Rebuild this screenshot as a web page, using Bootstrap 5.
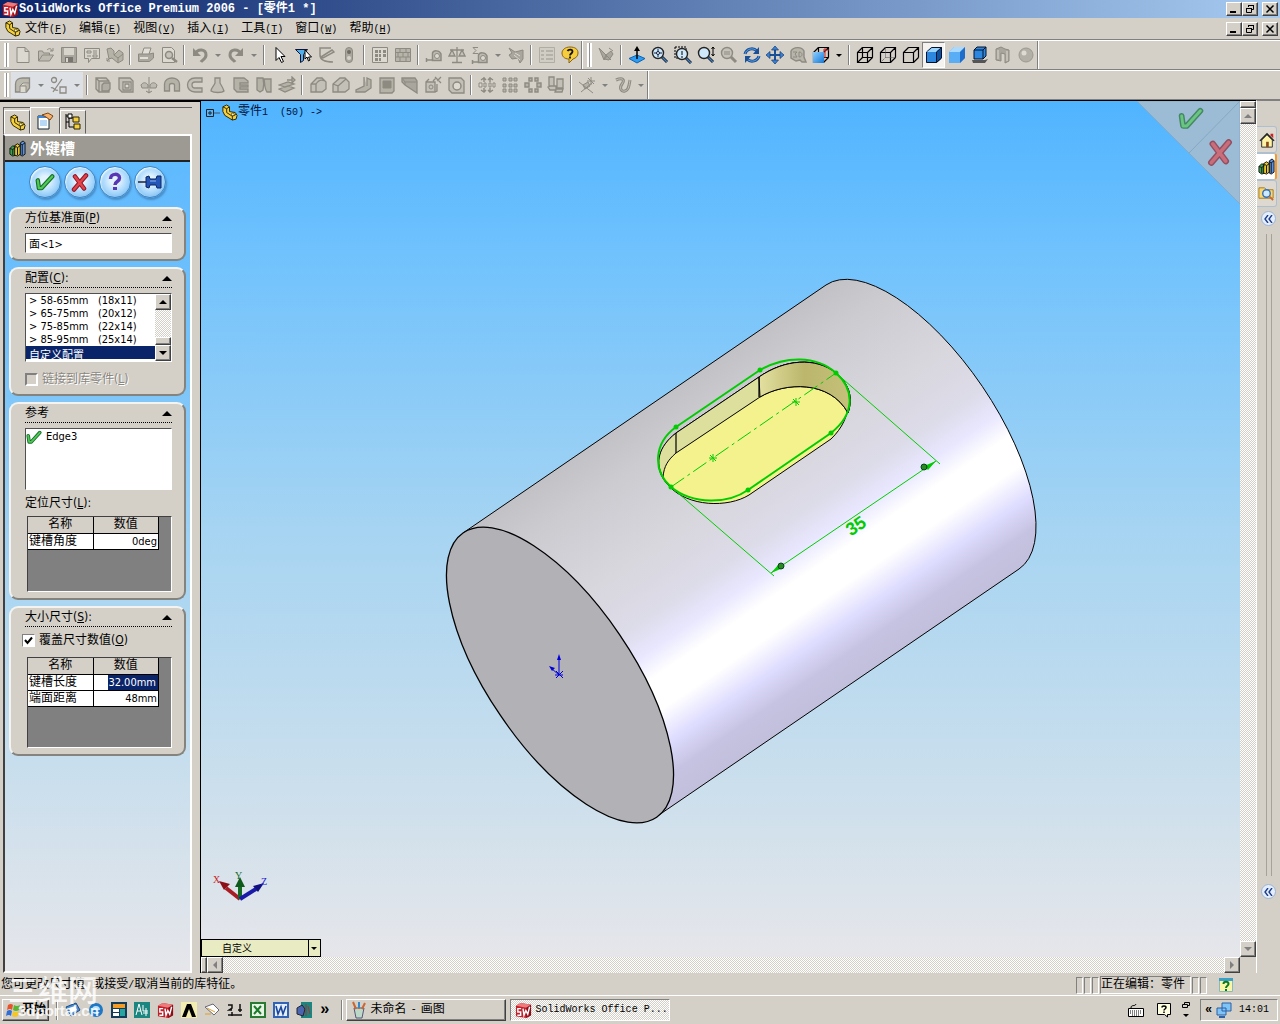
<!DOCTYPE html>
<html lang="zh-CN">
<head>
<meta charset="utf-8">
<meta name="viewport" content="width=device-width, initial-scale=1">
<title>SolidWorks Office Premium 2006 - [零件1 *]</title>
<link href="https://cdn.jsdelivr.net/npm/bootstrap@5.3.0/dist/css/bootstrap.min.css" rel="stylesheet">
<script src="https://cdn.jsdelivr.net/npm/bootstrap@5.3.0/dist/js/bootstrap.bundle.min.js" defer></script>
<style>
:root{--face:#d4d0c8;--dark:#808080;--navy:#0a246a}
body{font:12px/16px "Liberation Mono","Noto Sans CJK SC",monospace;color:#000;background:var(--face);overflow:hidden}
button,select,input{font:inherit;color:inherit;border-radius:0}
button{background:none;border:0;padding:0}
svg{display:block;flex:none}
.half{font-size:10px}
.raised{background:var(--face);border:1px solid;border-color:#fff #404040 #404040 #fff;box-shadow:inset -1px -1px 0 #808080}
.sunken{border:1px solid;border-color:#808080 #fff #fff #808080}
.dither{background:repeating-conic-gradient(#fff 0 25%,#d4d0c8 0 50%) 0 0/2px 2px}
.titlebar{height:18px;background:linear-gradient(90deg,#0a246a,#a6caf0);color:#fff;font-weight:700;padding:0 2px}
.winbtn{width:16px;height:14px;display:flex;align-items:center;justify-content:center}
.menubar{height:22px;border-bottom:1px solid #808080;padding:0 2px 0 4px}
.menubar a{color:#000;text-decoration:none}
.menus{gap:12px;padding-top:2px}
.bar{height:30px;border-top:1px solid #fff;border-bottom:1px solid #808080;padding-left:4px}
.grip{width:5px;height:24px;border:solid #fff;border-width:0 2px;background:#909090;margin-right:2px}
.tb{width:23px;height:26px;display:flex;align-items:center;justify-content:center}
.tb:disabled{color:#8d8a82}
.tb svg{width:18px;height:18px}
.tb.on{background:#f4f3f0;border:1px solid;border-color:#808080 #fff #fff #808080}
.dd{width:13px;height:26px;display:flex;align-items:center;justify-content:center}
.dd::after{content:"";border:solid transparent;border-width:3px 3px 0;border-top-color:currentColor}
.dd:disabled{color:#808080}
.sepv{width:8px;height:20px;padding-left:3px}
.sepv::after{content:"";display:block;width:2px;height:20px;border-left:1px solid #808080;background:#fff}
.endline{width:2px;height:28px;border-left:1px solid #808080;background:#fff}
.side{width:201px;border-top:2px solid #000;padding:5px 8px 0 3px;flex:none;border-right:1px solid #000}
.sideborder{height:27px;border:solid;border-width:1px 0 0 1px;border-color:#606060}
.tabb{width:26px;height:24px;display:flex;align-items:center;justify-content:center;border:1px solid;border-color:#fff #606060 transparent #fff}
.tabb.cur{height:27px;width:30px}
.pane{border:2px solid #fff;border-left-color:#404040;background:linear-gradient(#5cb9ff,#74c2fa 25%,#b4d9f0 60%,#d3e1ec 84%,#e6e6ea)}
.pmhead{height:26px;background:#9c9a92;border-bottom:2px solid #222;color:#fff;font:700 15px/24px "Noto Sans CJK SC",sans-serif}
.orbs{gap:3px;padding:0 0 5px}
.orb{width:32px;height:32px;border-radius:50%;display:flex;align-items:center;justify-content:center;border:1px solid #3d86c4;background:radial-gradient(circle at 50% 45%,#e2f3ff 20%,#9fd3fb 60%,#5ba2dc);box-shadow:1px 2px 2px #33669988,inset 1px 1px 2px #fff}
.grp{background:var(--face);border:2px solid;border-color:#f4f3ef #85837d #85837d #f4f3ef;border-radius:9px;padding:1px 12px 6px 14px;font-family:"DejaVu Sans Condensed","Noto Sans CJK SC",sans-serif;font-size:11px}
.grp h2{font-size:12px;line-height:17px;font-weight:400;margin:0 0 5px;border-bottom:1px dotted #000}
.grp h2 i{border:solid transparent;border-width:0 5px 5px;border-bottom-color:#000}
.field{display:block;width:100%;background:#fff;border:1px solid;border-color:#505050 #fff #fff #505050;padding:0 3px}
.tick{appearance:none;width:13px;height:13px;margin:0;background:var(--face);border:2px solid;border-color:#808080 #fff #fff #808080;flex:none}
.tick:checked{border-width:1px;background:#fff url("data:image/svg+xml,%3Csvg xmlns='http://www.w3.org/2000/svg' viewBox='0 0 11 11'%3E%3Cpath d='M2 5l2.500 3L9 2.500' fill='none' stroke='%23000' stroke-width='2'/%3E%3C/svg%3E") center/11px}
.lbl{font-size:12px;line-height:18px}
.lbl.off{color:#8a8780;text-shadow:1px 1px #fff}
.lbox{border:1px solid;border-color:#505050 #fff #fff #505050;height:69px}
.lbox select{appearance:none;border:0;padding:0;outline:0;background:#fff;overflow:hidden;height:67px}
.lbox option{padding:0 3px;font-size:11px;line-height:13px;min-height:13px;height:13px;white-space:pre}
.lbox option:checked{background:linear-gradient(#0a246a,#0a246a);-webkit-text-fill-color:#fff}
.sbtn{width:16px;height:16px;flex:none;display:flex;align-items:center;justify-content:center}
.arr{border:4px solid transparent}
.arr.up{border-top:0;border-bottom-color:currentColor}
.arr.dn{border-bottom:0;border-top-color:currentColor}
.arr.lt{border-left:0;border-right-color:currentColor}
.arr.rt{border-right:0;border-left-color:currentColor}
.gridbox{background:#808080;border:1px solid;border-color:#404040 #fff #fff #404040;margin:0 0 0 2px}
.gridbox table{width:131px;border-collapse:collapse;font-size:12px;line-height:15px;table-layout:fixed}
.gridbox td,.gridbox th{border:1px solid #000;border-top:0;border-left:0;padding:0 1px;height:16px;white-space:nowrap;overflow:hidden;font-weight:400}
.gridbox th{background:var(--face);text-align:center}
.gridbox td{background:#fff}
.gridbox td+td{text-align:right;font-size:11px}
.gridbox input{display:block;width:100%;height:15px;border:0;padding:0 2px;text-align:right;color:#fff;background:linear-gradient(90deg,#fff 14px,#0a246a 14px)}
.view{background:linear-gradient(#50b4ff,#70c2fd 18%,#a6d4f2 50%,#cfe0ec 83%,#e6e6ea);min-height:0}
.view>.scene{position:absolute;width:100%;height:100%;left:0;top:0}
.tree{left:4px;top:3px;color:#00123a}
.corner{right:0;top:0}
.triad{left:6px;bottom:50px}
.cfg{left:0;bottom:0;width:120px;height:18px}
.cfg select{appearance:none;background:#e9ebc2;border:1px solid #000;width:100%;height:18px;padding:2px 20px 0;font-size:10px}
.cfg::after{content:"";position:absolute;right:0;top:0;width:13px;height:18px;border:1px solid #000;pointer-events:none}
.cfg i{position:absolute;right:4px;top:8px;border:solid transparent;border-width:3px 3px 0;border-top-color:#000;pointer-events:none}
.rail{width:24px;flex:none;border-top:1px solid #808080;border-left:1px solid #fff;padding-top:25px}
.railtab{width:20px;height:27px;display:flex;align-items:center;justify-content:center;border:1px solid #aebfd0;border-left:0;border-radius:0 3px 3px 0;background:#ddd9d1}
.railtab.cur{background:#fff;border-right:2px solid #f39a2e}
.chev{width:15px;height:15px;border-radius:50%;background:#e4eefb;border:1px solid #9db4d4;color:#1c3c8c;display:flex;align-items:center;justify-content:center}
.status{height:22px;padding:2px 47px 0 1px;gap:1px}
.cellp{width:7px;height:17px}
.taskbar{height:29px;border-top:1px solid #fff;padding:0 2px}
.task{width:160px;height:22px;padding:0 4px}
.wm{left:8px;bottom:4px;color:#ffffffd9;pointer-events:none;font-family:"Noto Sans CJK SC",sans-serif}
.wm b{display:block;font-size:30px;line-height:28px;font-weight:500}
.wm small{display:block;font:700 15px/18px "Liberation Sans",sans-serif;padding-left:10px}
</style>
</head>
<body class="vh-100 d-flex flex-column position-relative">

<svg width="0" height="0" class="position-absolute" aria-hidden="true">
<defs>
<linearGradient id="blue" x1="0" y1="0" x2="1" y2="1"><stop offset="0" stop-color="#8fd0ff"/><stop offset="1" stop-color="#1478d8"/></linearGradient>
<symbol id="part" viewBox="0 0 18 18"><path d="M2 3l4-2 3 2v5l6 1 2 3-1 4-4 1-8-5-2-4z" fill="#f4d13c" stroke="#2b2200"/><path d="M2 3l4 2 3-2M6 5v4l6 4 4-2M12 13v4" fill="none" stroke="#2b2200"/><circle cx="12.500" cy="11" r="1.500" fill="#fff6b0" stroke="#2b2200" stroke-width=".7"/></symbol>
<symbol id="books" viewBox="0 0 18 18"><path d="M1 9l3-3 3 2v8l-3 1-3-2z" fill="#3fa34d" stroke="#111"/><path d="M6 6l3-2 3 2v9l-3 2-3-1z" fill="#e6c72d" stroke="#111"/><path d="M12 3l3-2 2 2v12l-3 2-2-1z" fill="#5c93e0" stroke="#111"/><path d="M1 9l3 1 3-2M4 10v6M6 6l3 2 3-2M9 8v8M12 4l2 1 3-2M14 5v11" stroke="#111" fill="none"/></symbol>
<symbol id="sw" viewBox="0 0 18 18"><path d="M1 4l5-3 11 2v11l-5 3-11-2z" fill="#c11f2a"/><path d="M1 4l5-3 11 2-5 3z" fill="#ee7b7b"/><path d="M12 6l5-3v11l-5 3z" fill="#8c0d17"/><path d="M6.500 7H3v3.500h3V14H2.500M8.500 7l1 7 2-5 2 4 2-8" fill="none" stroke="#fff" stroke-width="1.500"/></symbol>
<symbol id="check" viewBox="0 0 18 18"><path d="M2.500 7.500l1 7h2.500L15.500 4" fill="none" stroke="#176b2b" stroke-width="4" stroke-linejoin="round" stroke-linecap="round"/><path d="M2.500 7.500l1 7h2.500L15.500 4" fill="none" stroke="#4fca54" stroke-width="2" stroke-linejoin="round" stroke-linecap="round"/></symbol>
<symbol id="cross" viewBox="0 0 18 18"><path d="M4 3l9 12M15 2L3 16" stroke="#8e1625" stroke-width="4.500" stroke-linecap="round"/><path d="M4 3l9 12M15 2L3 16" stroke="#e3444c" stroke-width="2.500" stroke-linecap="round"/></symbol>
<symbol id="min" viewBox="0 0 10 10"><path d="M1 8h6" stroke="#000" stroke-width="2"/></symbol>
<symbol id="res" viewBox="0 0 10 10"><path d="M3.500 3V1.500h5v4H7M1.500 4.500h5v4h-5zM1 4.500h6M3 1.500h6" fill="none" stroke="#000"/></symbol>
<symbol id="cls" viewBox="0 0 10 10"><path d="M1.500 1.500l7 7M8.500 1.500l-7 7" stroke="#000" stroke-width="1.500"/></symbol>
<symbol id="new" viewBox="0 0 18 18"><path d="M3 1.500h8l4 4v11H3zM11 1.500v4h4" fill="#dcd9d1" stroke="currentColor"/></symbol>
<symbol id="open" viewBox="0 0 18 18"><path d="M1.500 15V5h4l1 2h6v2M1.500 15l4-6h11l-4 6z" fill="#bdbab0" stroke="currentColor"/><path d="M10 4c2-2 4-2 5 1m-2 0h3V2" fill="none" stroke="currentColor"/></symbol>
<symbol id="save" viewBox="0 0 18 18"><path d="M1.500 1.500h15v15h-15z" fill="#aaa79e" stroke="currentColor"/><path d="M4 2h10v7H4z" fill="#d7d4cc"/><path d="M5 11h8v5H5z" fill="#787570"/><path d="M6 12h2v4H6z" fill="#d7d4cc"/></symbol>
<symbol id="draw" viewBox="0 0 18 18"><path d="M1.500 2.500h15v10h-8l-3 4v-4h-4z" fill="#d7d4cc" stroke="currentColor"/><path d="M4 5h4v2H4zM10 5h4M10 7h4M4 10h4M10 9h4v2h-4z" fill="none" stroke="currentColor"/></symbol>
<symbol id="asm" viewBox="0 0 18 18"><path d="M1 3l4-1 3 3v4l5-5 4 3v7l-5 3-6-5-3 1z" fill="#b5b2a8" stroke="currentColor"/><path d="M8 9l4 3v5M12 12l5-4M4 12l-3 3m0-3v3h3" fill="none" stroke="currentColor"/></symbol>
<symbol id="print" viewBox="0 0 18 18"><path d="M5 8l2-6h7l-2 6" fill="#e2dfd8" stroke="currentColor"/><path d="M1.500 8h11l4-1v5l-4 3.500h-11z" fill="#aaa79e" stroke="currentColor"/><path d="M3 12h8" stroke="#e2dfd8" stroke-width="2"/></symbol>
<symbol id="prev" viewBox="0 0 18 18"><path d="M2.500 1.500h9l3 3v12h-12z" fill="#dcd9d1" stroke="currentColor"/><circle cx="9" cy="9" r="3.500" fill="#c5c2b9" stroke="currentColor" stroke-width="1.500"/><path d="M12 12l5 4" stroke="currentColor" stroke-width="2.500"/></symbol>
<symbol id="undo" viewBox="0 0 18 18"><path d="M4 8c3-6 11-5 11 1 0 4-4 5-5 7" fill="none" stroke="currentColor" stroke-width="3"/><path d="M2 2v8h8z" fill="currentColor"/></symbol>
<symbol id="redo" viewBox="0 0 18 18"><path d="M14 8C11 2 3 3 3 9c0 4 4 5 5 7" fill="none" stroke="currentColor" stroke-width="3"/><path d="M16 2v8H8z" fill="currentColor"/></symbol>
<symbol id="ptr" viewBox="0 0 18 18"><path d="M5 1.500v13l3-3 2.500 5 2-1-2.500-5h4z" fill="#fff" stroke="#000"/></symbol>
<symbol id="filt" viewBox="0 0 18 18"><path d="M1.500 3.500h12l-4 5v6l-3 2v-8z" fill="#4fb0ea" stroke="#113"/><path d="M11 4v9l2-2 1.500 4 1.500-1-1.500-3h3z" fill="#fff" stroke="#000"/></symbol>
<symbol id="sket" viewBox="0 0 18 18"><path d="M14 2H3v7c0 6 6 7 13 7M4 11L15 4l2 2-11 6z" fill="none" stroke="currentColor" stroke-width="1.500"/></symbol>
<symbol id="light" viewBox="0 0 18 18"><rect x="5.500" y="1.500" width="7" height="15" rx="3.500" fill="#a9a69d" stroke="currentColor"/><circle cx="9" cy="6" r="2" fill="#6e6c66"/><circle cx="9" cy="12" r="2" fill="#d7d4cc"/></symbol>
<symbol id="grid" viewBox="0 0 18 18"><path d="M1.500 1.500h15v15h-15z" fill="#dcd9d1" stroke="currentColor"/><path d="M4 4h3v3H4zM8 4h2v3H8zM12 4h3v3h-3zM4 8h3v3H4zM8 8h2v3H8zM12 8h3v3h-3zM4 12h3v3H4zM8 12h2v3H8z" fill="currentColor"/></symbol>
<symbol id="brick" viewBox="0 0 18 18"><path d="M1.500 2.500h15v13h-15zM1 6.500h16M1 11h16M6 2v4M12 2v4M4 7v4M9 7v4M14 7v4M6 11v4M12 11v4" fill="#b7b4aa" stroke="currentColor"/></symbol>
<symbol id="tape" viewBox="0 0 18 18"><path d="M7.500 14.500V7c1-3 7-3 8.500 1v6.500z" fill="#bdbab0" stroke="currentColor" stroke-width="1.500"/><circle cx="12" cy="10" r="2.500" fill="#dcd9d1" stroke="currentColor"/><path d="M1 14h7M1.500 12v4" stroke="currentColor" stroke-width="1.500"/></symbol>
<symbol id="scale" viewBox="0 0 18 18"><path d="M9 1v15M4 16.500h10M2 4h14M4 4L1 10h6zM14 4l-3 6h6z" fill="#c5c2b9" stroke="currentColor" stroke-width="1.300"/></symbol>
<symbol id="sum" viewBox="0 0 18 18"><path d="M7 1.500H2l3 3-3 3h5" fill="none" stroke="currentColor"/><use href="#tape" width="18" height="18" y="2"/></symbol>
<symbol id="hand" viewBox="0 0 18 18"><path d="M2 2l6 4 8-2v9l-3 4-2-5-6 1-3-4 3-2z" fill="#a9a69d" stroke="currentColor"/><path d="M8 7l5 3M7 9l6 5" stroke="#dcd9d1"/></symbol>
<symbol id="list" viewBox="0 0 18 18"><path d="M1.500 1.500h15v15h-15z" fill="#d0cdc4" stroke="#b0ada4"/><path d="M3 5h3M8 5h7M3 9h3M8 9h7M3 13h3M8 13h7" stroke="#aba89f" stroke-width="1.500"/></symbol>
<symbol id="help" viewBox="0 0 18 18"><path d="M9 1c5 0 8 2 8 6 0 3-2 5-5 6l-4 4v-4C3 13 1 10 1 7s3-6 8-6z" fill="#f6cd3d" stroke="#8a6410"/><path d="M6.500 5c1-2 5-2 5 .500 0 2-2.500 2-2.500 4M9 10.500v2" fill="none" stroke="#111" stroke-width="1.800"/></symbol>
<symbol id="brush" viewBox="0 0 18 18"><path d="M2 2l8 8-3 4zM9 9l5-4 2 3-4 6-5-1z" fill="#a9a69d" stroke="currentColor"/><path d="M9 9l5 5M12 2l4 3" stroke="currentColor"/></symbol>
<symbol id="norm" viewBox="0 0 18 18"><path d="M9 9l8 3.500L9 17l-8-4.500z" fill="#2b9cf2" stroke="#0d62b5"/><path d="M9 13V3" stroke="#000" stroke-width="1.500"/><path d="M9 0l3 5H6z"/></symbol>
<symbol id="mag" viewBox="0 0 18 18"><circle cx="7" cy="7" r="5.500" fill="#cfe9fb" stroke="#222" stroke-width="1.400"/><path d="M11 11l5 5" stroke="#222" stroke-width="3"/><path d="M11.500 11.500l4.500 4.500" stroke="#3a83d0" stroke-width="1.200"/></symbol>
<symbol id="zfit" viewBox="0 0 18 18"><use href="#mag"/><path d="M7 3v8M3 7h8" stroke="#124"/><circle cx="7" cy="7" r="1.500" fill="#fff" stroke="#124"/></symbol>
<symbol id="zarea" viewBox="0 0 18 18"><path d="M1 1h11v11H1z" fill="none" stroke="#000" stroke-dasharray="2 1"/><use href="#mag" x="1" y="1"/><path d="M8 5v4M8 10v2" stroke="#000"/></symbol>
<symbol id="zinout" viewBox="0 0 18 18"><use href="#mag"/><path d="M16 1v8M14.500 3L16 1l1.500 2M14.500 8L16 10l1.500-2" stroke="#000" fill="none"/></symbol>
<symbol id="zsel" viewBox="0 0 18 18"><circle cx="7" cy="7" r="5.500" fill="#c5c2b9" stroke="currentColor" stroke-width="1.400"/><path d="M11 11l5 5" stroke="currentColor" stroke-width="3"/><path d="M4 6h6M4 8h6" stroke="currentColor"/></symbol>
<symbol id="rot" viewBox="0 0 18 18"><path d="M2 8c1-5 8-7 12-3M16 10c-1 5-8 7-12 3" fill="none" stroke="#1b4f96" stroke-width="3"/><path d="M2 8c1-5 8-7 12-3M16 10c-1 5-8 7-12 3" fill="none" stroke="#5ba5ea"/><path d="M16 1v7h-6zM2 17v-7h6z" fill="#1b4f96"/></symbol>
<symbol id="pan" viewBox="0 0 18 18"><path d="M9 2v14M2 9h14" stroke="#1b4f96" stroke-width="2"/><path d="M9 0l3.500 4h-7zM9 18l3.500-4h-7zM0 9l4-3.500v7zM18 9l-4-3.500v7z" fill="#3b83d0" stroke="#123a77" stroke-width=".7"/></symbol>
<symbol id="r3d" viewBox="0 0 18 18"><path d="M2 5c3-5 11-4 13 0v6l2 5h-4l-2-2-4 1-5-3z" fill="#b8b5ab" stroke="currentColor" stroke-width="1.400"/><path d="M4 6h4l-2 2 2 3H4M10 6v5c4 0 4-5 0-5" stroke="currentColor" fill="none"/></symbol>
<symbol id="cubew" viewBox="0 0 18 18"><path d="M1.500 6.500h10v10h-10zM6.500 1.500h10v10M1.500 6.500l5-5M11.500 6.500l5-5M11.500 16.500l5-5" fill="none" stroke="#000" stroke-width="1.200"/></symbol>
<symbol id="wire" viewBox="0 0 18 18"><use href="#cubew"/><path d="M6.500 1.500v10h10M1.500 16.500l5-5" fill="none" stroke="#000" stroke-width="1.200"/></symbol>
<symbol id="hid" viewBox="0 0 18 18"><use href="#cubew"/><path d="M6.500 1.500v10h10M1.500 16.500l5-5" fill="none" stroke="#555" stroke-dasharray="1 1"/></symbol>
<symbol id="orient" viewBox="0 0 18 18"><use href="#wire"/><path d="M1 6h11v11H1z" fill="url(#blue)"/><path d="M13 2v10M11 4h6" stroke="#c22"/></symbol>
<symbol id="shade" viewBox="0 0 18 18"><path d="M1.500 6l5-4.500h10V12l-5 4.500h-10z" fill="#2d87de" stroke="#04122c"/><path d="M2 6l5-4h9l-5 4z" fill="#9ad4fb"/><path d="M11.500 6l5-4.500V12l-5 4.500z" fill="#0d4fa0" stroke="#04122c"/></symbol>
<symbol id="shade2" viewBox="0 0 18 18"><path d="M1 6l5-5h11v11l-5 5H1z" fill="#58adf5"/><path d="M1 6l5-5h11l-5 5z" fill="#a9d9ff"/><path d="M12 6l5-5v11l-5 5z" fill="#1f6dcb"/></symbol>
<symbol id="shad" viewBox="0 0 18 18"><path d="M1 14h13l3-1-3 4H2z" fill="#555"/><path d="M3 4l3-3h9v9l-3 3H3z" fill="#2d87de" stroke="#04122c"/><path d="M3 4h9l3-3M12 4v9" fill="none" stroke="#04122c"/></symbol>
<symbol id="sect" viewBox="0 0 18 18"><path d="M2 3l5-2 4 2 4 1v11l-4 2V8L7 7v8l-5-1z" fill="#a9a69d" stroke="currentColor"/><path d="M4 4v9M13 5v10" stroke="#dcd9d1"/></symbol>
<symbol id="ball" viewBox="0 0 18 18"><circle cx="9" cy="9" r="7" fill="#b3b0a7" stroke="#9c998f"/><circle cx="7" cy="7" r="2.500" fill="#dedbd4"/></symbol>
<symbol id="f1" viewBox="0 0 18 18"><path d="M1.500 16V8c0-4 3-6 7-6h7v10l-3 4z" fill="#bcb9af" stroke="currentColor" stroke-width="1.300"/><path d="M6 16v-6h6v6M6 10l3-3h6" fill="#dcd9d1" stroke="currentColor"/></symbol>
<symbol id="f2" viewBox="0 0 18 18"><circle cx="4" cy="4" r="2.500" fill="none" stroke="currentColor" stroke-width="1.300"/><path d="M3 16L12 3M10 11h6v6h-6zM1 12c2-2 4 4 7 2" fill="none" stroke="currentColor" stroke-width="1.300"/></symbol>
<symbol id="f3" viewBox="0 0 18 18"><path d="M2 2h10l3 3v11H5l-3-3zM2 2l3 3h10M5 5v11" fill="#c3c0b7" stroke="currentColor" stroke-width="1.300"/><path d="M8 9l2-2h6v6l-2 2H8z" fill="#b0ada4" stroke="currentColor" stroke-width="1.300"/></symbol>
<symbol id="f4" viewBox="0 0 18 18"><path d="M2 2h11l3 3v11H5l-3-3z" fill="#c3c0b7" stroke="currentColor" stroke-width="1.300"/><path d="M6 6h8v8H6zM8 8h4v4H8z" fill="#dcd9d1" stroke="currentColor" stroke-width="1.300"/></symbol>
<symbol id="f5" viewBox="0 0 18 18"><path d="M9 1v16M1 9c2-3 5-3 7 0v3H2zM17 9c-2-3-5-3-7 0v3h6zM6 15l3 2 3-2" fill="#bdbab0" stroke="currentColor"/></symbol>
<symbol id="f6" viewBox="0 0 18 18"><path d="M1.500 15V8c0-8 15-8 15 0v7h-5V9c0-2-5-2-5 0v6z" fill="#b5b2a8" stroke="currentColor" stroke-width="1.300"/></symbol>
<symbol id="f7" viewBox="0 0 18 18"><path d="M16 2H9C-1 2-1 16 9 16h7v-4H9c-4 0-4-6 0-6h7z" fill="#c3c0b7" stroke="currentColor" stroke-width="1.300"/></symbol>
<symbol id="f8" viewBox="0 0 18 18"><path d="M6 2h5v5c3 5 3 5 4 8-2 2-10 2-13 0 0-3 3-5 4-8z" fill="#c3c0b7" stroke="currentColor" stroke-width="1.300"/></symbol>
<symbol id="f9" viewBox="0 0 18 18"><path d="M2 2h10l4 3v2H8v2h8v2H8v2h8v3H5l-3-3z" fill="#b5b2a8" stroke="currentColor" stroke-width="1.300"/></symbol>
<symbol id="f10" viewBox="0 0 18 18"><path d="M2 2h6c1 4 1 8 0 12l-3 2-3-2zM9 3h7v13h-4c-3-4-2-9-3-13z" fill="#b5b2a8" stroke="currentColor" stroke-width="1.300"/></symbol>
<symbol id="f11" viewBox="0 0 18 18"><path d="M1 9l9-3 6 2-9 3zM1 13l9-3 6 2-9 4zM9 4h5m0 0V1l3 3-3 3V4" fill="#b5b2a8" stroke="currentColor" stroke-width="1.300"/></symbol>
<symbol id="f12" viewBox="0 0 18 18"><path d="M2 16V8l6-6h5l4 4v7l-4 3zM2 8h5c3-5 7-4 9-3M7 8v8" fill="#c3c0b7" stroke="currentColor" stroke-width="1.300"/></symbol>
<symbol id="f13" viewBox="0 0 18 18"><path d="M1 16V8l7-6h5l4 4v7l-4 3zM1 8l5 2v6M6 10l8-7" fill="#c3c0b7" stroke="currentColor" stroke-width="1.300"/></symbol>
<symbol id="f14" viewBox="0 0 18 18"><path d="M9 1v9l-8 4v2h9l6-4V4l-4-2v8" fill="#b5b2a8" stroke="currentColor" stroke-width="1.300"/></symbol>
<symbol id="f15" viewBox="0 0 18 18"><path d="M2 2h14v13l-2 2H2z" fill="#b5b2a8" stroke="currentColor" stroke-width="1.300"/><path d="M5 5h8v7H5z" fill="#8d8a82" stroke="currentColor"/></symbol>
<symbol id="f16" viewBox="0 0 18 18"><path d="M1 2h13l2 3v12L4 9 1 6z" fill="#a9a69d" stroke="currentColor" stroke-width="1.300"/><path d="M1 2l3 4h12M4 6v3" fill="none" stroke="currentColor"/></symbol>
<symbol id="f17" viewBox="0 0 18 18"><path d="M2 6h9v10H2zM2 6l3-3M13 8v7l-2 1M9 5l3-3M13 5l4-4M11 1l6 6" fill="#c3c0b7" stroke="currentColor" stroke-width="1.300"/><circle cx="7" cy="11" r="2" fill="none" stroke="currentColor"/></symbol>
<symbol id="f18" viewBox="0 0 18 18"><path d="M2 2h12l3 3v12H5l-3-3z" fill="#c3c0b7" stroke="currentColor" stroke-width="1.300"/><circle cx="10" cy="10" r="4" fill="#dcd9d1" stroke="currentColor" stroke-width="1.500"/></symbol>
<symbol id="p1" viewBox="0 0 18 18"><path d="M6 1v5M3 4l3-2 2 2M6 17v-5M3 14l3 2 2-2M12 1v5M10 4l2-2 3 2M12 17v-5M10 14l2 2 3-2" fill="none" stroke="currentColor" stroke-width="1.400"/><path d="M1 7h3v4H1zM6 7h2v4H6zM11 7h2v4h-2zM15 7h2v4h-2z" fill="#dcd9d1" stroke="currentColor"/></symbol>
<symbol id="p2" viewBox="0 0 18 18"><path d="M2 2h3v3H2zM8 2h3v3H8zM13 2h3v3h-3zM2 8h3v3H2zM8 8h3v3H8zM13 8h3v3h-3zM2 13h3v3H2zM8 13h3v3H8zM13 13h3v3h-3z" fill="#b5b2a8" stroke="currentColor"/></symbol>
<symbol id="p3" viewBox="0 0 18 18"><path d="M5 2h3v3H5zM11 2h3v3h-3zM1 7h4v4H1zM13 7h4v4h-4zM5 13h3v3H5zM11 13h3v3h-3z" fill="#b5b2a8" stroke="currentColor" stroke-width="1.400"/></symbol>
<symbol id="p4" viewBox="0 0 18 18"><path d="M2 1h5v9H2zM10 3h6v9h-6zM1 11l3-1h5v4H3zM9 13h7l-1 3H8z" fill="#c3c0b7" stroke="currentColor" stroke-width="1.300"/></symbol>
<symbol id="c1" viewBox="0 0 18 18"><path d="M1 6l14 11M14 7L3 16M13 1v8M9 5h8M10 2l6 6M5 9l5-3 2 4-5 3z" fill="#b5b2a8" stroke="currentColor"/></symbol>
<symbol id="c2" viewBox="0 0 18 18"><path d="M2 4c7-3 9 0 6 4s-1 8 3 7 4-6 5-11" fill="none" stroke="currentColor" stroke-width="3"/><path d="M2 4c7-3 9 0 6 4s-1 8 3 7 4-6 5-11" fill="none" stroke="#c3c0b7"/></symbol>
</defs>
</svg>

<header class="titlebar d-flex align-items-center">
  <svg width="17" height="17"><use href="#sw"/></svg>
  <span class="flex-grow-1 text-nowrap">SolidWorks Office Premium 2006 - [零件1 *]</span>
  <button class="winbtn raised" aria-label="最小化"><svg width="10" height="10"><use href="#min"/></svg></button>
  <button class="winbtn raised me-1" aria-label="还原"><svg width="10" height="10"><use href="#res"/></svg></button>
  <button class="winbtn raised" aria-label="关闭"><svg width="10" height="10"><use href="#cls"/></svg></button>
</header>

<nav class="menubar d-flex align-items-center">
  <svg width="17" height="17" class="me-1"><use href="#part"/></svg>
  <div class="menus d-flex flex-grow-1 text-nowrap">
    <a href="#">文件<span class="half">(<u>F</u>)</span></a><a href="#">编辑<span class="half">(<u>E</u>)</span></a><a href="#">视图<span class="half">(<u>V</u>)</span></a><a href="#">插入<span class="half">(<u>I</u>)</span></a><a href="#">工具<span class="half">(<u>T</u>)</span></a><a href="#">窗口<span class="half">(<u>W</u>)</span></a><a href="#">帮助<span class="half">(<u>H</u>)</span></a>
  </div>
  <button class="winbtn raised" aria-label="最小化"><svg width="10" height="10"><use href="#min"/></svg></button>
  <button class="winbtn raised me-1" aria-label="还原"><svg width="10" height="10"><use href="#res"/></svg></button>
  <button class="winbtn raised" aria-label="关闭"><svg width="10" height="10"><use href="#cls"/></svg></button>
</nav>

<div class="bar d-flex align-items-center" role="toolbar" aria-label="标准">
  <span class="grip"></span>
  <button class="tb" disabled aria-label="新建"><svg><use href="#new"/></svg></button><button class="tb" disabled aria-label="打开"><svg><use href="#open"/></svg></button><button class="tb" disabled aria-label="保存"><svg><use href="#save"/></svg></button><button class="tb" disabled aria-label="工程图"><svg><use href="#draw"/></svg></button><button class="tb" disabled aria-label="装配体"><svg><use href="#asm"/></svg></button>
  <span class="sepv"></span>
  <button class="tb" disabled aria-label="打印"><svg><use href="#print"/></svg></button><button class="tb" disabled aria-label="预览"><svg><use href="#prev"/></svg></button>
  <span class="sepv"></span>
  <button class="tb" disabled aria-label="撤消"><svg><use href="#undo"/></svg></button><button class="dd" disabled aria-label="撤消列表"></button><button class="tb" disabled aria-label="重做"><svg><use href="#redo"/></svg></button><button class="dd" disabled aria-label="重做列表"></button>
  <span class="sepv"></span>
  <button class="tb" aria-label="选择"><svg><use href="#ptr"/></svg></button><button class="tb" aria-label="过滤器"><svg><use href="#filt"/></svg></button><button class="tb" disabled aria-label="草图"><svg><use href="#sket"/></svg></button><button class="tb" disabled aria-label="重建"><svg><use href="#light"/></svg></button>
  <span class="sepv"></span>
  <button class="tb" disabled aria-label="网格"><svg><use href="#grid"/></svg></button><button class="tb" disabled aria-label="纹理"><svg><use href="#brick"/></svg></button>
  <span class="sepv"></span>
  <button class="tb" disabled aria-label="测量"><svg><use href="#tape"/></svg></button><button class="tb" disabled aria-label="质量"><svg><use href="#scale"/></svg></button><button class="tb" disabled aria-label="方程式"><svg><use href="#sum"/></svg></button><button class="dd" disabled aria-label="更多"></button><button class="tb" disabled aria-label="检查"><svg><use href="#hand"/></svg></button>
  <span class="sepv"></span>
  <button class="tb" disabled aria-label="选项"><svg><use href="#list"/></svg></button><button class="tb" aria-label="帮助"><svg><use href="#help"/></svg></button>
  <span class="endline"></span><span class="grip ms-1"></span>
  <button class="tb" disabled aria-label="上一视图"><svg><use href="#brush"/></svg></button>
  <span class="sepv"></span>
  <button class="tb" aria-label="正视于"><svg><use href="#norm"/></svg></button><button class="tb" aria-label="整屏显示"><svg><use href="#zfit"/></svg></button><button class="tb" aria-label="局部放大"><svg><use href="#zarea"/></svg></button><button class="tb" aria-label="放大缩小"><svg><use href="#zinout"/></svg></button><button class="tb" disabled aria-label="放大所选"><svg><use href="#zsel"/></svg></button><button class="tb" aria-label="旋转"><svg><use href="#rot"/></svg></button><button class="tb" aria-label="平移"><svg><use href="#pan"/></svg></button><button class="tb" disabled aria-label="3D 视图"><svg><use href="#r3d"/></svg></button><button class="tb" aria-label="标准视图"><svg><use href="#orient"/></svg></button><button class="dd" aria-label="视图列表"></button>
  <span class="sepv"></span>
  <button class="tb" aria-label="线架图"><svg><use href="#wire"/></svg></button><button class="tb" aria-label="隐藏线可见"><svg><use href="#hid"/></svg></button><button class="tb" aria-label="消除隐藏线"><svg><use href="#cubew"/></svg></button><button class="tb on" aria-label="带边线上色"><svg><use href="#shade"/></svg></button><button class="tb" aria-label="上色"><svg><use href="#shade2"/></svg></button><button class="tb" aria-label="阴影"><svg><use href="#shad"/></svg></button><button class="tb" disabled aria-label="剖面"><svg><use href="#sect"/></svg></button><button class="tb" disabled aria-label="RealView"><svg><use href="#ball"/></svg></button>
  <span class="endline"></span>
</div>

<div class="bar d-flex align-items-center" role="toolbar" aria-label="特征">
  <span class="grip"></span>
  <div class="d-flex" style="background:#dde1e6"><button class="tb" disabled aria-label="特征"><svg><use href="#f1"/></svg></button><button class="dd" disabled aria-label="特征列表"></button><button class="tb" disabled aria-label="草图"><svg><use href="#f2"/></svg></button><button class="dd" disabled aria-label="草图列表"></button></div>
  <span class="sepv"></span>
  <button class="tb" disabled aria-label="拉伸"><svg><use href="#f3"/></svg></button><button class="tb" disabled aria-label="切除"><svg><use href="#f4"/></svg></button><button class="tb" disabled aria-label="旋转"><svg><use href="#f5"/></svg></button><button class="tb" disabled aria-label="旋转切除"><svg><use href="#f6"/></svg></button><button class="tb" disabled aria-label="扫描"><svg><use href="#f7"/></svg></button><button class="tb" disabled aria-label="放样"><svg><use href="#f8"/></svg></button><button class="tb" disabled aria-label="扫描切除"><svg><use href="#f9"/></svg></button><button class="tb" disabled aria-label="放样切除"><svg><use href="#f10"/></svg></button><button class="tb" disabled aria-label="边界"><svg><use href="#f11"/></svg></button>
  <span class="sepv"></span>
  <button class="tb" disabled aria-label="圆角"><svg><use href="#f12"/></svg></button><button class="tb" disabled aria-label="倒角"><svg><use href="#f13"/></svg></button><button class="tb" disabled aria-label="筋"><svg><use href="#f14"/></svg></button><button class="tb" disabled aria-label="抽壳"><svg><use href="#f15"/></svg></button><button class="tb" disabled aria-label="拔模"><svg><use href="#f16"/></svg></button><button class="tb" disabled aria-label="孔向导"><svg><use href="#f17"/></svg></button><button class="tb" disabled aria-label="圆顶"><svg><use href="#f18"/></svg></button>
  <span class="sepv"></span>
  <button class="tb" disabled aria-label="镜向"><svg><use href="#p1"/></svg></button><button class="tb" disabled aria-label="线性阵列"><svg><use href="#p2"/></svg></button><button class="tb" disabled aria-label="圆周阵列"><svg><use href="#p3"/></svg></button><button class="tb" disabled aria-label="移动"><svg><use href="#p4"/></svg></button>
  <span class="sepv"></span>
  <button class="tb" disabled aria-label="参考几何体"><svg><use href="#c1"/></svg></button><button class="dd" disabled aria-label="几何体列表"></button><button class="tb" disabled aria-label="曲线"><svg><use href="#c2"/></svg></button><button class="dd" disabled aria-label="曲线列表"></button>
  <span class="endline"></span>
</div>

<main class="d-flex flex-grow-1" style="min-height:0">
  <aside class="side d-flex flex-column">
    <div class="sideborder d-flex align-items-end">
      <button class="tabb" aria-label="设计树"><svg width="17" height="17"><use href="#part"/></svg></button>
      <button class="tabb cur" aria-label="属性"><svg width="18" height="18" viewBox="0 0 18 18"><path d="M2 4h11v13H2z" fill="#fff" stroke="#123"/><path d="M2 4h11v2H2z" fill="#3d86d8"/><path d="M4 9h7M4 11h7M4 13h7" stroke="#6fb2ee"/><path d="M6 3l6-2 5 3-3 4-4-3z" fill="#f6b26a" stroke="#7a4312"/></svg></button>
      <button class="tabb" aria-label="配置"><svg width="18" height="18" viewBox="0 0 18 18"><path d="M2 1v15M5 3H2M9 5H5v9h5M2 9h3" fill="none" stroke="#000"/><path d="M4 1h4v4H4z" fill="#fff" stroke="#000"/><path d="M9 4h6v5H9zM10 11h6v5h-6z" fill="#f4d13c" stroke="#2b2200"/></svg></button>
    </div>
    <div class="pane flex-grow-1 d-flex flex-column">
      <div class="pmhead d-flex align-items-center"><svg width="17" height="17" class="mx-1"><use href="#books"/></svg>外键槽</div>
      <div class="orbs d-flex justify-content-center my-1">
        <button class="orb" aria-label="确定"><svg width="20" height="20"><use href="#check"/></svg></button>
        <button class="orb" aria-label="取消"><svg width="18" height="19"><use href="#cross"/></svg></button>
        <button class="orb" aria-label="帮助"><svg width="18" height="20" viewBox="0 0 18 20"><path d="M4.500 7c0-6 9-6 9-1 0 4-4.500 3-4.500 7" fill="none" stroke="#5a35b4" stroke-width="3.500"/><path d="M7 15h4v3H7z" fill="#5a35b4"/></svg></button>
        <button class="orb" aria-label="保持可见"><svg width="26" height="18" viewBox="0 0 26 18"><path d="M1 9h9" stroke="#223" stroke-width="1.500"/><path d="M9 4l3-1 1 3h6l1-3h4v12h-4l-1-3h-6l-1 3-3-1z" fill="#2456b8" stroke="#0b2462"/><path d="M13 8h6" stroke="#8db8f2"/></svg></button>
      </div>
      <div class="d-flex flex-column px-1" style="gap:6px">
        <section class="grp">
          <h2 class="d-flex justify-content-between align-items-center"><label for="plane">方位基准面(<u>P</u>)</label><i></i></h2>
          <input id="plane" class="field" value="面&lt;1&gt;" style="height:20px">
        </section>
        <section class="grp">
          <h2 class="d-flex justify-content-between align-items-center"><label for="conf">配置(<u>C</u>):</label><i></i></h2>
          <div class="lbox d-flex">
            <select id="conf" size="5" class="flex-grow-1"><option>&gt; 58-65mm &nbsp; (18x11)</option><option>&gt; 65-75mm &nbsp; (20x12)</option><option>&gt; 75-85mm &nbsp; (22x14)</option><option>&gt; 85-95mm &nbsp; (25x14)</option><option selected>自定义配置</option></select>
            <div class="dither d-flex flex-column"><span class="sbtn raised"><span class="arr up"></span></span><span class="flex-grow-1"></span><span class="raised" style="height:8px"></span><span class="sbtn raised"><span class="arr dn"></span></span></div>
          </div>
          <label class="lbl off d-flex align-items-center mt-2 gap-1"><input type="checkbox" class="tick" disabled><span>链接到库零件(<u>L</u>)</span></label>
        </section>
        <section class="grp">
          <h2 class="d-flex justify-content-between align-items-center"><span>参考</span><i></i></h2>
          <div class="field px-0" style="height:62px"><div class="d-flex align-items-center"><svg width="16" height="16" viewBox="0 0 18 18"><use href="#check"/></svg><span class="ms-1">Edge3</span></div></div>
          <div class="lbl my-1">定位尺寸(<u>L</u>):</div>
          <div class="gridbox" style="height:76px"><table><thead><tr><th>名称</th><th>数值</th></tr></thead><tbody><tr><td>键槽角度</td><td>0deg</td></tr></tbody></table></div>
        </section>
        <section class="grp">
          <h2 class="d-flex justify-content-between align-items-center mb-0"><span>大小尺寸(<u>S</u>):</span><i></i></h2>
          <label class="lbl d-flex align-items-center gap-1 mt-1 mb-2 text-nowrap" style="margin-left:-3px"><input type="checkbox" class="tick" checked><span>覆盖尺寸数值(<u>O</u>)</span></label>
          <div class="gridbox" style="height:91px"><table><thead><tr><th>名称</th><th>数值</th></tr></thead><tbody><tr><td>键槽长度</td><td class="p-0"><input value="32.00mm" aria-label="键槽长度"></td></tr><tr><td>端面距离</td><td>48mm</td></tr></tbody></table></div>
        </section>
      </div>
    </div>
  </aside>

  <div class="d-flex flex-column flex-grow-1" style="min-width:0;border-top:1px solid #000">
    <div class="d-flex flex-grow-1" style="min-height:0">
      <div class="view position-relative flex-grow-1 overflow-hidden">
        <svg class="scene" viewBox="202 101 1037 856" preserveAspectRatio="xMidYMid meet" role="img" aria-label="带键槽的圆柱">
          <defs>
            <linearGradient id="cyl" gradientUnits="userSpaceOnUse" x1="463" y1="533" x2="656" y2="817"><stop offset="0" stop-color="#c2c1c5"/><stop offset=".12" stop-color="#cccbd0"/><stop offset=".35" stop-color="#d8d7de"/><stop offset=".5" stop-color="#dcdbe8"/><stop offset=".59" stop-color="#e8e7ff"/><stop offset=".66" stop-color="#fff"/><stop offset=".75" stop-color="#fff"/><stop offset=".84" stop-color="#dedcff"/><stop offset=".92" stop-color="#c6c3e2"/><stop offset="1" stop-color="#c2bfdc"/></linearGradient>
            <linearGradient id="wall" gradientUnits="userSpaceOnUse" x1="759" y1="0" x2="850" y2="0"><stop offset="0" stop-color="#e3e0a0"/><stop offset=".5" stop-color="#bbb66c"/><stop offset="1" stop-color="#c6c17a"/></linearGradient>
          </defs>
          <path d="M463 533L826 285A171 72 55.800 0 1 1019 569L656 817Z" fill="url(#cyl)" stroke="#000"/>
          <ellipse cx="560" cy="675" rx="172" ry="72" transform="rotate(55.800 560 675)" fill="#b2b1b6" stroke="#000" stroke-width="1.300"/>
          <path d="M676 433L759 377C785 359 816 357 836 373C853 388 854 417 831 439L749 495C728 508 688 507 669 486C653 470 656 449 676 433Z" fill="#f4f28c" stroke="#000"/>
          <path d="M663 477C664 466 668 460 676 453L760 397C785 382 830 380 848 413C853 398 850 385 836 373C816 357 785 359 759 377L676 433C658 447 655 463 663 477Z" fill="#dddf9c" stroke="#000"/>
          <path d="M759 377C785 359 816 357 836 373C850 385 853 398 848 413C830 380 785 382 760 397Z" fill="url(#wall)" stroke="#000"/>
          <path d="M676 433V453M759 377V397" stroke="#000" stroke-width="1.200"/>
          <path d="M676 427L760 370C785 356 816 355 836 373C855 390 855 414 831 433L748 490C728 504 693 505 671 487C652 470 654 443 676 427Z" fill="none" stroke="#0c0" stroke-width="2"/>
          <g fill="#0c0"><circle cx="676" cy="427" r="2.500"/><circle cx="760" cy="370" r="2.500"/><circle cx="836" cy="373" r="2.500"/><circle cx="831" cy="433" r="2.500"/><circle cx="748" cy="490" r="2.500"/><circle cx="671" cy="487" r="2.500"/></g>
          <path d="M671 487L836 373" stroke="#0c0" stroke-dasharray="16 4 3 4"/>
          <path d="M709 458h8M713 454v8M710 455l6 6M792 402h8M796 398v8M793 399l6 6M671 487L774 576M836 373L940 464M771 573L936 461" stroke="#0c0" fill="none"/>
          <path d="M771 573l8-9 4 4zM936 461l-8 9-4-4z" fill="#0c0"/>
          <g fill="#2a8a1e" stroke="#042"><circle cx="781" cy="566" r="3"/><circle cx="924" cy="467" r="3"/></g>
          <text x="856" y="532" text-anchor="middle" transform="rotate(-34 856 526)" font-family="Liberation Sans" font-size="18" font-weight="700" fill="#0c0">35</text>
          <path d="M559 675V657M559 675L551 668M555 675h8M556 671l7 7M563 671l-7 7" stroke="#00d" fill="none"/><path d="M559 654l2 6h-4zM549 666l6 2-3 3z" fill="#00d"/>
        </svg>
        <div class="tree position-absolute d-flex align-items-center text-nowrap">
          <svg width="16" height="16" viewBox="0 0 16 16"><path d="M1.500 4.500h7v7h-7zM3 8h4M5 6v4" fill="none" stroke="#222"/><path d="M9 8h6" stroke="#456"/></svg>
          <svg width="17" height="17"><use href="#part"/></svg>
          <span>零件<span class="half" style="white-space:pre">1  (50) -&gt;</span></span>
        </div>
        <svg class="corner position-absolute" width="103" height="103" viewBox="0 0 103 103" role="img" aria-label="确认角落"><path d="M0 0h103v103z" fill="#9bbcd4" stroke="#86abc8"/><path d="M52 52L103 0" stroke="#86a8c2"/><g opacity=".65"><svg x="39" y="4" width="30" height="26"><use href="#check"/></svg><svg x="70" y="38" width="26" height="27"><use href="#cross"/></svg></g></svg>
        <svg class="triad position-absolute" width="64" height="40" viewBox="207 868 64 40" role="img" aria-label="坐标轴"><path d="M240 900L226 889" stroke="#a81c24" stroke-width="4"/><path d="M219 882l11 3-6 6z" fill="#8c1018"/><path d="M240 900V888" stroke="#156b22" stroke-width="4"/><path d="M240 878l5 10h-10z" fill="#0d5a1a"/><path d="M240 900l16-10" stroke="#1a1aa8" stroke-width="4"/><path d="M264 884l-6 9-5-6z" fill="#10107e"/><g font-family="Liberation Serif" font-size="10"><text x="213" y="884" fill="#c22">X</text><text x="235" y="880" fill="#156b22">Y</text><text x="261" y="886" fill="#22c">Z</text></g></svg>
        <div class="cfg position-absolute"><select aria-label="配置"><option>自定义</option></select><i></i></div>
      </div>
      <div class="dither d-flex flex-column" style="color:#808080"><span class="raised" style="height:7px;width:16px"></span><button class="sbtn raised" aria-label="上"><span class="arr up"></span></button><span class="flex-grow-1"></span><button class="sbtn raised" aria-label="下"><span class="arr dn"></span></button></div>
    </div>
    <div class="d-flex" style="color:#808080"><div class="dither d-flex flex-grow-1"><span class="raised" style="width:6px"></span><button class="sbtn raised" aria-label="左"><span class="arr lt"></span></button><span class="flex-grow-1"></span><button class="sbtn raised" aria-label="右"><span class="arr rt"></span></button></div><span style="width:16px"></span></div>
  </div>

  <aside class="rail d-flex flex-column">
    <button class="railtab" aria-label="主页"><svg width="16" height="16" viewBox="0 0 18 18"><path d="M3 9v8h12V9L9 3z" fill="#fdf3a6" stroke="#222"/><path d="M1 10l8-8 8 8" fill="none" stroke="#222" stroke-width="1.500"/><path d="M13 2h3v5l-3-3z" fill="#c22"/><path d="M8 11h3v6H8z" fill="#8a4b16"/></svg></button>
    <button class="railtab cur" aria-label="设计库"><svg width="17" height="17"><use href="#books"/></svg></button>
    <button class="railtab" aria-label="文件探索器"><svg width="17" height="17" viewBox="0 0 18 18"><path d="M1 3h6l2 2h7v9H1z" fill="#f8d775" stroke="#a5791a"/><circle cx="9" cy="9" r="4" fill="#cdeaff" stroke="#3671b5" stroke-width="1.500"/><path d="M12 12l4 4" stroke="#c96a2a" stroke-width="2"/></svg></button>
    <button class="chev mt-1 ms-1" aria-label="展开"><svg width="9" height="8" viewBox="0 0 9 8"><path d="M4 0L1 4l3 4M8 0L5 4l3 4" fill="none" stroke="#1c3c8c" stroke-width="1.400"/></svg></button>
    <span class="flex-grow-1 mx-auto my-2" style="width:6px;border:solid #a5a29a;border-width:0 1px"></span>
    <button class="chev ms-1" style="margin-bottom:74px" aria-label="展开"><svg width="9" height="8" viewBox="0 0 9 8"><path d="M4 0L1 4l3 4M8 0L5 4l3 4" fill="none" stroke="#1c3c8c" stroke-width="1.400"/></svg></button>
  </aside>
</main>

<div class="status d-flex align-items-center text-nowrap">
  <span class="flex-grow-1">您可更改尺寸值 或接受<span class="half">/</span>取消当前的库特征。</span>
  <span class="cellp sunken"></span><span class="cellp sunken"></span><span class="cellp sunken"></span>
  <span class="sunken" style="width:91px">正在编辑：零件</span>
  <span class="cellp sunken"></span><span class="cellp sunken"></span>
  <svg width="14" height="14" viewBox="0 0 14 14" style="margin-left:11px"><path d="M.500.500h13v13H.500z" fill="#fbf6a6" stroke="#8bb"/><path d="M0 0h14v3H0z" fill="#3aa0c8"/><path d="M4.500 6c0-3 5-3 5 0 0 2-2.500 1.500-2.500 4M7 11v2" fill="none" stroke="#0a7a20" stroke-width="2"/></svg>
</div>

<footer class="taskbar d-flex align-items-center text-nowrap">
  <button class="raised d-flex align-items-center fw-bold" style="width:47px;height:22px;padding:0 3px"><svg width="16" height="16" viewBox="0 0 16 16"><path d="M2 3q3-2 5 0l-1 5q-2-2-5 0z" fill="#e8542a"/><path d="M8 3q3 2 6 0l-1 5q-3 2-6 0z" fill="#5cb531"/><path d="M1 9q3-2 5 0l-1 5q-2-2-5 0z" fill="#2f6fd6"/><path d="M7 9q3 2 6 0l-1 5q-3 2-6 0z" fill="#f4c62c"/></svg>开始</button>
  <span class="sepv ms-1 me-1"></span>
  <div class="d-flex align-items-center" style="gap:7px">
    <svg width="16" height="16" viewBox="0 0 16 16"><path d="M1 5l10-4 4 7-9 6z" fill="#4d8fd4" stroke="#174b86"/><path d="M4 6l6-2 2 4-6 3z" fill="#fff"/></svg>
    <svg width="16" height="16" viewBox="0 0 16 16"><circle cx="8" cy="8" r="5.500" fill="#b9e2fb" stroke="#1f78c6" stroke-width="3"/><path d="M3 9h9" stroke="#1f78c6" stroke-width="2"/></svg>
    <svg width="16" height="16" viewBox="0 0 16 16"><path d="M0 0h16v16H0z" fill="#123c5a"/><path d="M2 2h12v4H2z" fill="#f49b25"/><path d="M2 7h6v3H2zM2 11h6v3H2z" fill="#fff"/><path d="M9 7h5v7H9z" fill="#26a5a0"/></svg>
    <svg width="16" height="16" viewBox="0 0 16 16"><path d="M0 0h16v16H0z" fill="#1b8580"/><path d="M2 13L5 2l3 11M3 9h4M9 3v6h5M12 6v8M9 11h5" fill="none" stroke="#fff"/></svg>
    <svg width="17" height="17"><use href="#sw"/></svg>
    <svg width="16" height="16" viewBox="0 0 16 16"><path d="M0 0h16v16H0z" fill="#f2ecb0"/><path d="M1 15L6 2h4l5 13h-4L8 7l-3 8z"/></svg>
    <svg width="16" height="16" viewBox="0 0 16 16"><path d="M1 5l8-3 6 6-5 5z" fill="#fff" stroke="#667"/><path d="M3 6l8 4M1 12h6" stroke="#e0a020"/></svg>
    <svg width="16" height="16" viewBox="0 0 16 16"><path d="M1 3h4v3L2 8h3M1 13h14M5 10v4M13 2v8M11 8h4" fill="none" stroke="#111" stroke-width="1.500"/></svg>
    <svg width="16" height="16" viewBox="0 0 16 16"><path d="M1 1h14v14H1z" fill="#e7f3e4" stroke="#2b7a34" stroke-width="2"/><path d="M4 4l7 8M11 4l-7 8" stroke="#1c7a2b" stroke-width="2"/></svg>
    <svg width="16" height="16" viewBox="0 0 16 16"><path d="M1 1h14v14H1z" fill="#e6eefc" stroke="#3162b5" stroke-width="2"/><path d="M3 4l2 8 3-7 2 7 3-8" fill="none" stroke="#1b479b" stroke-width="1.600"/></svg>
    <svg width="16" height="16" viewBox="0 0 16 16"><path d="M5 0h11v16H5z" fill="#1b8580"/><path d="M1 6l5-3 3 4-2 7-6-2z" fill="#4a66b0" stroke="#223"/><path d="M10 2v12M12 4l2 8" stroke="#a33"/></svg>
  </div>
  <b class="ms-2 me-2 fs-6 lh-1">»</b>
  <span class="sepv"></span>
  <button class="task raised d-flex align-items-center gap-1"><svg width="16" height="18" viewBox="0 0 16 18"><path d="M3 7h10l-2 10H5z" fill="#bcd9c8" stroke="#557"/><path d="M5 8L2 1M8 8V1M11 8l3-6" stroke="#c63" stroke-width="2"/><path d="M8 7V1" stroke="#38c" stroke-width="2"/></svg>未命名 <span class="half">-</span> 画图</button>
  <button class="task sunken dither d-flex align-items-center gap-1 ms-1 half"><svg width="17" height="17"><use href="#sw"/></svg>SolidWorks Office P...</button>
  <span class="flex-grow-1"></span>
  <svg width="16" height="16" viewBox="0 0 16 16" class="me-2"><path d="M.500 6.500h15v8H.500z" fill="#fff" stroke="#000"/><path d="M2 9h12M2 11h12M4 13h8" stroke="#000" stroke-dasharray="1 1"/><path d="M3 6c0-4 4-1 5-4" fill="none" stroke="#000"/></svg>
  <svg width="16" height="16" viewBox="0 0 16 16" style="margin:0 9px 0 4px"><path d="M1.500 1.500h13v11h-3v2.500l-3-2.500h-7z" fill="#ffffe1" stroke="#000"/><path d="M6 5.500c0-2 4-2 4 0 0 1.500-2 1.500-2 3M8 9.500v1.500" fill="none" stroke="#000" stroke-width="1.500"/></svg>
  <svg width="10" height="18" viewBox="0 0 10 18" style="margin-right:9px"><path d="M3.500 3V1.500h5v3H7M1.500 3.500h5v3h-5z" fill="none" stroke="#000"/><path d="M2 13h6l-3 3z"/></svg>
  <div class="sunken d-flex align-items-center px-1" style="height:22px;width:78px"><b>«</b><svg width="16" height="16" viewBox="0 0 16 16" class="mx-1"><path d="M6 1h9v8H6zM1 6h9v7H1z" fill="#7fc4f6" stroke="#2a61a8"/><path d="M3 15h6" stroke="#2a61a8" stroke-width="2"/></svg><span class="half ms-auto me-1">14:01</span></div>
</footer>

<div class="wm position-absolute"><b>三维网</b><small>3dportal.cn</small></div>
</body>
</html>
